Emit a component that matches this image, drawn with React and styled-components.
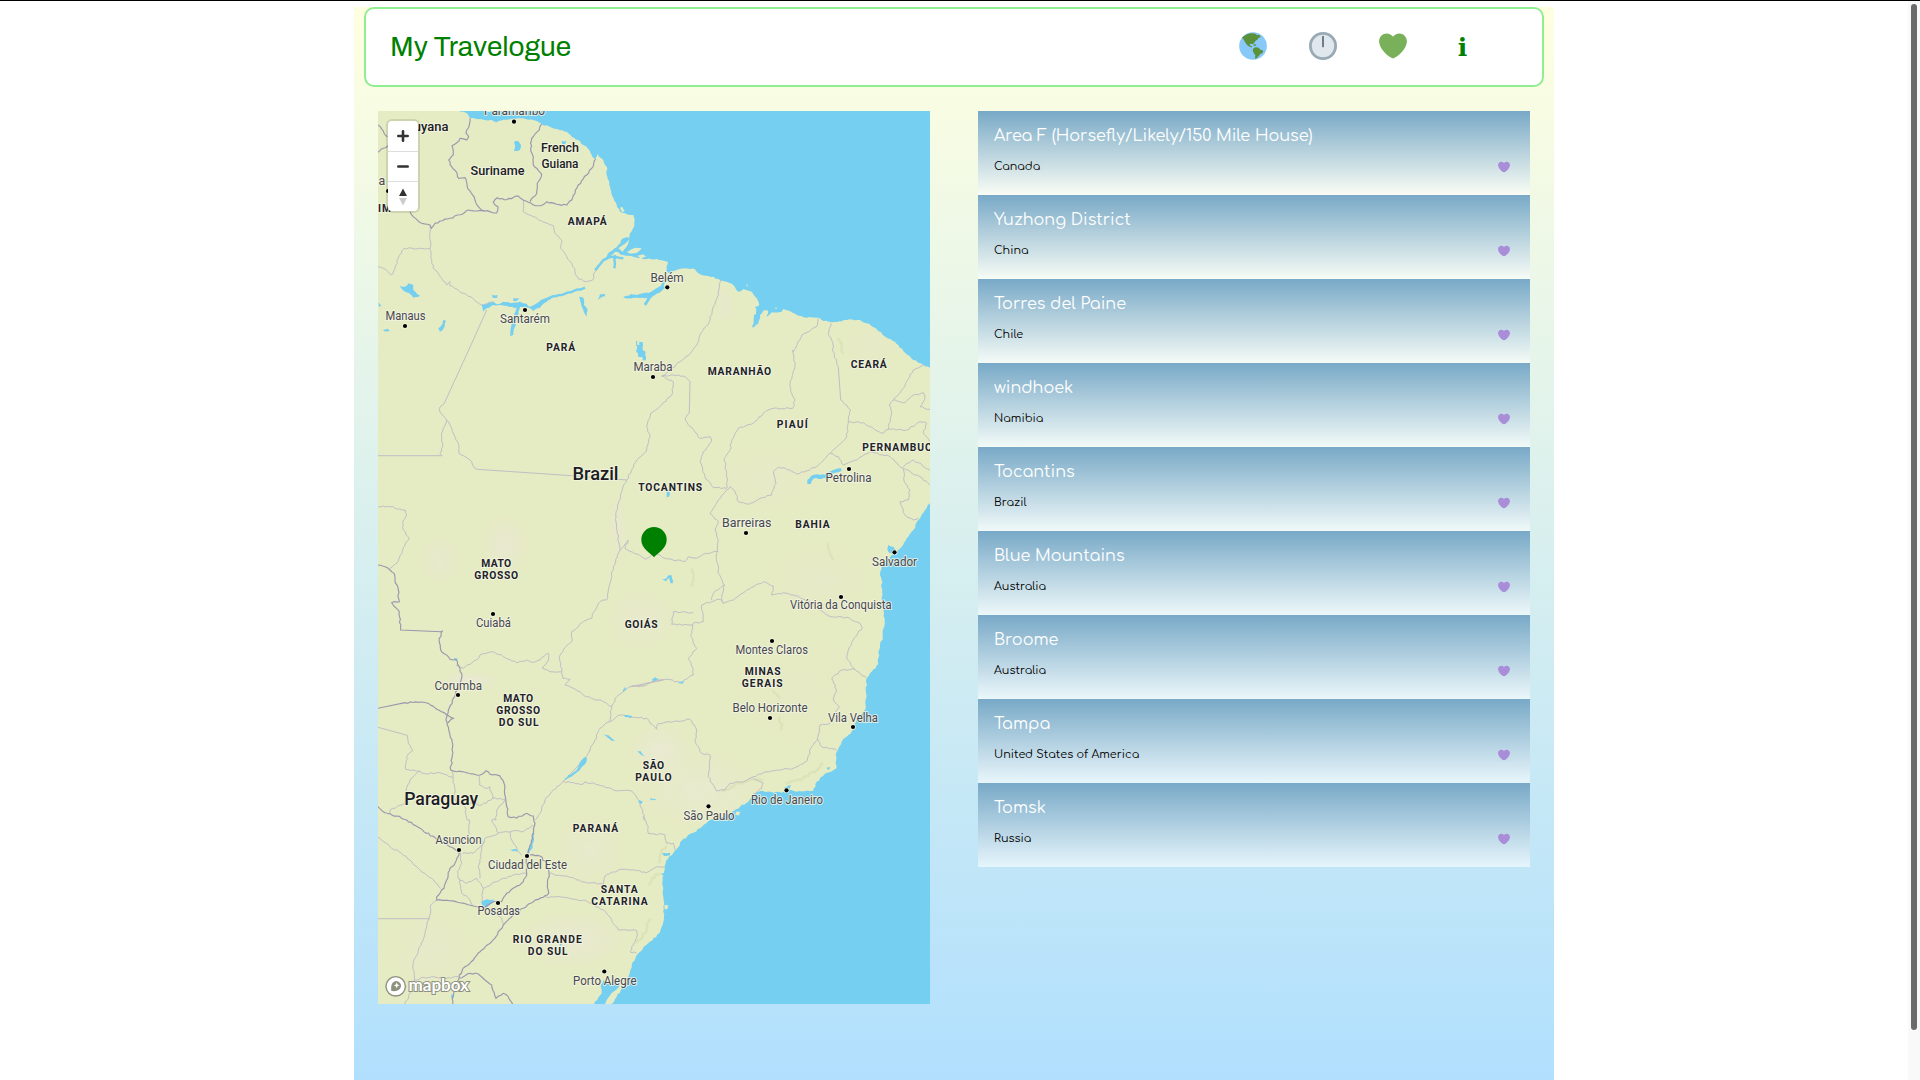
import React from "react";
import styled, { createGlobalStyle } from "styled-components";

const Global = createGlobalStyle`
  * { box-sizing: border-box; }
  html, body { margin: 0; padding: 0; height: 100%; overflow: hidden; background: #fff; }
  body { font-family: "Comfortaa", "Lato", sans-serif; }
`;

const Window = styled.div`
  display: flex;
  height: 1080px;
  border-top: 1px solid #000;
  overflow: hidden;
`;
const Viewport = styled.div`
  flex: 1;
  display: flex;
  justify-content: center;
  padding-top: 6px;
`;
const Track = styled.div`
  width: 12px;
  background: #f9f9f9;
  padding: 3px 3px 0;
`;
const Thumb = styled.div`
  height: 1026px;
  border-radius: 3px;
  background: #6b6b6b;
`;
const Page = styled.div`
  width: 1200px;
  height: 1124px;
  flex: none;
  background: linear-gradient(lightyellow, #addeff);
`;
const Header = styled.header`
  display: flex;
  align-items: center;
  justify-content: space-between;
  height: 80px;
  margin: 0 10px;
  padding: 0 65px 0 24px;
  background: #fff;
  border: 2px solid lightgreen;
  border-radius: 10px;
`;
const Title = styled.h1`
  margin: 0;
  padding-bottom: 2px;
  font: 400 28px "Archivo", "Liberation Sans", Arial, sans-serif;
  color: green;
`;
const Nav = styled.nav`
  display: flex;
  align-items: center;
  gap: 42px;
  padding-bottom: 3px;
`;
const NavIcon = styled.svg`
  display: block;
  width: 28px;
  height: 28px;
`;
const Info = styled.span`
  width: 27px;
  margin-right: 1px;
  padding-top: 4px;
  text-align: center;
  font: 700 25px/28px "DejaVu Serif", serif;
  color: green;
`;
const Columns = styled.main`
  display: grid;
  grid-template-columns: 552px 552px;
  gap: 48px;
  padding: 24px 24px 0;
`;
const MapBox = styled.section`
  position: relative;
  height: 893px;
  overflow: hidden;
`;
const MapSvg = styled.svg`
  display: block;
  width: 552px;
  height: 893px;
`;
const Controls = styled.div`
  position: absolute;
  top: 10px;
  left: 10px;
  width: 30px;
  border-radius: 4px;
  background: #fff;
  box-shadow: 0 0 0 2px rgba(0, 0, 0, 0.1);
`;
const ControlButton = styled.button`
  display: flex;
  align-items: center;
  justify-content: center;
  width: 30px;
  height: 30px;
  padding: 0;
  border: 0;
  background: none;
  & + & { border-top: 1px solid #ddd; }
`;
const List = styled.section`
  display: flex;
  flex-direction: column;
`;
const Card = styled.article`
  display: flex;
  flex-direction: column;
  height: 84px;
  padding: 13px 20px 0 16px;
  background: linear-gradient(#78a9c7, rgba(255, 255, 255, 0.6));
`;
const Place = styled.h2`
  margin: 0;
  font: 400 16px/24px "Comfortaa", "Lato", sans-serif;
  white-space: nowrap;
  color: #fff;
`;
const Meta = styled.div`
  display: flex;
  align-items: center;
  justify-content: space-between;
  height: 20px;
  margin-top: 9px;
`;
const Country = styled.span`
  font: 400 11.2px/20px "Comfortaa", "Lato", sans-serif;
  color: #000;
`;
const SmallHeart = styled.svg`
  width: 12px;
  height: 12px;
`;

const HEART =
  "M35.885 11.833c0-5.45-4.418-9.868-9.867-9.868-3.308 0-6.227 1.633-8.018 4.129-1.791-2.496-4.71-4.129-8.017-4.129-5.45 0-9.868 4.417-9.868 9.868 0 .772.098 1.52.266 2.241C1.751 22.587 11.216 31.568 18 34.034c6.783-2.466 16.249-11.447 17.617-19.959.17-.721.268-1.469.268-2.242z";

/* Map geometry is stored per tile, in thirds of a pixel from the tile's corner. */
const TILES = {
  A: [370, 105], B: [630, 105], C: [370, 340], D: [630, 340],
  E: [370, 590], F: [630, 590], G: [370, 800], H: [630, 800],
};
const parse = (src) => {
  const out = [];
  let origin = TILES.A;
  src.trim().split(/\s+/).forEach((tok) => {
    if (TILES[tok]) { origin = TILES[tok]; return; }
    const [x, y] = tok.split(",").map(Number);
    out.push([origin[0] + x / 3, origin[1] + y / 3]);
  });
  return out;
};
const noise = (n) => {
  const s = Math.sin(n * 12.9898) * 43758.5453;
  return (s - Math.floor(s)) * 2 - 1;
};
const roughen = (pts, amp) => {
  const out = [pts[0]];
  for (let i = 1; i < pts.length; i++) {
    const [x0, y0] = pts[i - 1];
    const [x1, y1] = pts[i];
    const len = Math.hypot(x1 - x0, y1 - y0);
    const n = len > 26 ? 1 : Math.max(1, Math.round(len / 2.6));
    for (let k = 1; k < n; k++) {
      const d = noise(x0 + y0 * 3 + k * 7) * amp;
      out.push([x0 + ((x1 - x0) * k) / n - ((y1 - y0) / len) * d, y0 + ((y1 - y0) * k) / n + ((x1 - x0) / len) * d]);
    }
    out.push([x1, y1]);
  }
  return out;
};
const path = (src, amp = 0.8, close = false) =>
  "M" + roughen(parse(src), amp).map(([x, y]) => `${x.toFixed(1)} ${y.toFixed(1)}`).join("L") + (close ? "Z" : "");

const LAND = `A 24,18 268,18 280,20 296,32 300,40 330,42 345,45 365,45 380,52 400,44 450,40 475,44 500,48 515,57 545,68 570,76 590,80 605,95 625,105 640,120 655,132 665,150 675,162 682,148 700,165 710,185 712,215 720,245 728,275 740,300 750,320 765,325 790,330 794,345 792,365 780,385 778,398 760,400 745,420 720,440 705,460 690,478 715,458 735,440 760,450 790,455 830,462 860,462 892,470
B 113,468 108,500 125,503 140,495 165,490 195,493 210,508 235,513 265,522 290,530 310,540 325,560 340,552 365,560 380,580 388,600 375,605 378,620 380,640 365,668 385,655 390,630 405,615 415,618 410,635 425,622 455,620 460,612 480,618 500,630 530,638 562,638 580,648 605,652 650,645 690,645 710,655 740,672 770,698 795,710 820,738 850,765 872,775 880,780 900,788
D 900,490 880,518 865,540 850,570 830,595 815,620 800,640 785,645 770,665 755,680 750,705 755,720 755,780
F 757,40 764,92 758,140 747,180 745,222 720,250 709,268 708,310 708,350 700,365 680,385 665,425 650,440 635,455 625,478 617,495 620,535 590,548 560,575 550,602 500,605 475,598 470,605 430,608 400,603 375,610 360,628
H 355,5 330,20 300,40 270,55 235,62 210,85 185,100 155,122 145,142 130,160 108,182 105,205 98,240 100,290 102,350 95,380 88,400 55,430 25,460 5,495
G 775,530 755,565 740,590 725,612 24,612`;

const WATER = [
  "G 672,612 695,580 692,560 700,540 720,555 745,540 748,560 730,575 710,600 705,612",
  "A 432,110 445,108 453,120 450,135 432,138 436,125",
  "A 88,542 105,545 115,535 130,540 130,555 150,572 130,578 118,565 98,555",
  "A 24,592 34,602 28,606",
  "A 205,670 218,655 222,644 228,648 222,668 210,680",
  "A 40,674 52,671 60,677 42,679",
  "A 335,600 350,597 370,590 380,598 400,590 420,594 450,590 470,596 478,605 500,595 520,582 545,572 560,570 530,590 510,608 490,618 478,608 450,606 440,640 430,690 420,694 422,670 440,608 405,602 370,600 350,610 340,620",
  "A 365,570 382,570 382,578 368,578", "A 430,580 448,580 440,588 430,588",
  "A 628,575 640,578 642,600 653,615 650,635 640,615 634,600",
  "A 684,585 690,568 704,566 706,574 692,578", "A 575,108 590,108 585,118 576,116",
  "A 760,575 800,570 850,560 880,542 888,548 860,566 840,580 828,600 822,596 832,578 800,578 765,580",
  "B 18,708 22,708 22,720 28,720 28,710 38,712 38,735 47,740 47,766 38,766 38,757 24,755 24,745 18,740 22,722 18,722",
  "B 372,630 390,620 385,645 370,668",
  "D 532,420 548,405 585,404 605,392 632,384 635,392 610,400 590,415 550,416 542,432 532,432",
  "D 110,450 119,448 117,470 110,472", "D 97,718 110,715 113,707 125,706 128,730 122,730 118,714 108,724",
  "D 775,615 790,620 800,638 780,640 772,628",
  "E 584,565 620,540 635,510 648,500 650,512 630,540 600,562 586,570",
  "E 700,432 715,436 735,452 725,452", "E 802,484 812,484 824,498 815,496", "E 845,270 856,262 867,266 852,274",
  "E 758,300 766,290 768,298 760,305", "E 762,376 786,378 786,382 766,382", "E 840,625 857,627 857,631 842,631",
  "E 806,630 818,634 814,642 806,638", "E 252,205 262,205 260,212 254,212",
  "F 145,275 162,272 158,281 148,280", "F 462,592 482,585 480,594 472,600",
  "F 590,533 600,531 598,539 592,538",
  "G 333,305 350,298 372,298 368,308 352,322 338,318", "G 420,148 440,148 444,155 428,154",
  "G 488,98 494,100 488,140 478,160 472,158 484,130", "G 244,583 252,585 248,597 244,592",
  "G 876,160 900,158 900,166 882,168", "G 872,222 888,220 884,228",
  "G 568,432 576,432 572,438",
];
const ISLANDS = ["A 745,430 770,412 778,402 772,422 758,440", "A 770,440 795,428 815,430 800,444 780,446", "A 802,452 820,448 828,455 812,460", "B 396,632 412,615 415,625 402,640", "B 435,608 441,608 440,612 436,612", "B 348,538 354,540 352,545", "A 750,308 757,305 764,318 756,322", "H 318,35 330,36 328,46 316,44", "H 103,314 116,316 112,328 104,328"];
const NATIONAL = [
  "A 24,60 40,78 52,95", "A 24,142 40,130 54,122",
  "A 300,40 298,60 290,75 288,85 296,95 290,105 270,100 262,112 246,122 250,150 236,165 245,185 262,208 266,220 285,218 292,245 302,262 315,285 328,308 345,318",
  "A 120,320 130,335 155,355 180,360 184,370 195,355 210,348 240,340 262,330 285,322 295,315 320,318 345,318 380,324 384,305 370,292 382,278 410,284 445,273 460,285 475,292 490,300 510,302 530,290 560,298 590,300 605,285 615,265 625,240 650,210 665,190 677,162",
  "A 515,57 508,75 485,100 482,130 490,155 490,180 515,208 502,235 500,265 480,290",
  "C 24,675 45,680 60,690 72,700 75,720 85,750 87,780 E 88,35 65,38 88,65 92,120 214,125 218,122 208,145 212,180 240,208 258,208 270,235 276,260 262,300 250,325 232,375 228,390 240,435 248,470 246,505 242,540 260,545 290,548 330,555 348,542 360,553 390,558 402,580 406,620 G 415,50 440,54 470,40 490,48 495,70 490,100 484,130 470,165 470,225 460,245 435,262 410,280 395,305 370,305 345,322 310,318 270,308 240,302 200,300 200,290 222,265 230,240 240,205 255,190 268,160 240,140 200,118 150,85 110,60 80,48 45,38 24,20",
  "E 24,355 105,338 168,338 200,358 250,385 232,400",
  "G 480,165 510,168 530,190 537,220 532,260 536,280 520,292 490,305 460,325 430,345 400,375 390,390 365,425 330,455 310,480 285,500 268,525 265,540 250,570 248,612",
  "G 268,535 300,520 325,522 345,540 365,555 378,595 400,580 415,590 428,612",
];
const STATES = [
  "A 460,285 460,320 490,335 515,348 550,362 555,385 575,405 572,430 590,455 605,475 615,500 625,522 650,530 668,525 675,500 705,460",
  "A 180,365 180,430 185,475 195,495 215,520 230,540 240,530 240,542 280,565 300,575 335,600 370,590",
  "A 180,430 102,430 85,460 75,490 65,510 40,490 24,485",
  "A 350,615 304,718 C 225,185 208,205 212,220 230,240 220,265 215,290 218,320 210,340 216,347 24,347",
  "C 230,240 245,265 255,290 265,310 267,340 300,360 310,378 322,388 605,407 770,420",
  "C 24,500 70,500 75,505 105,510 110,525 98,545 100,570 118,595 105,615 95,640 80,670 60,685",
  "D 95,108 130,125 125,165 95,195 62,220 50,260 60,290 50,330 20,360 C 770,420 755,455 745,490 738,530 742,580 750,630 730,680 720,730 710,780 E 690,35 672,65 665,85 640,95 605,125 605,155 580,180 568,205 575,245 578,265 600,268 585,285 610,295 650,320 700,335 725,350 718,395 690,415 675,450 660,480 640,510 585,570 545,605 525,630 510,670 495,690",
  "C 750,630 775,600 765,625 830,658",
  "D 50,655 75,640 105,655 165,665 175,650 200,655 230,640 265,635",
  "G 24,112 60,140 95,160 120,180 150,210 185,235 212,265",
  "G 200,300 182,315 180,345 165,400 145,450 130,490 133,540 120,580 105,612", "G 24,356 180,356",
  "G 130,545 150,535 190,530 220,535 265,530",
  "E 24,412 112,436 115,460 128,482 110,500 107,538 150,543 160,550 215,550 250,562",
  "E 150,543 120,570 108,600 105,640 60,660 55,675",
  "E 246,545 256,600 252,625 285,650 292,690 G 298,60 298,100 275,130",
  "E 330,555 328,585 345,595 360,590 368,625 335,645 300,640", "E 368,625 405,628 380,660 378,690 G 365,60 385,100 345,115 342,125",
  "G 385,100 430,92 460,95 490,75", "G 420,95 425,120 445,155 455,165",
  "G 345,125 310,160 278,160", "G 342,125 335,150 325,200 330,235",
  "G 270,155 275,190 262,215 265,235 290,250 320,235 340,265 380,245 430,225 470,220",
  "G 268,235 275,280 300,300 310,318", "G 340,265 335,300 345,322 395,355 400,375",
  "E 258,225 280,235 320,210 330,195 370,185 400,200 440,218 470,210 485,217 510,210 535,190 536,210 517,235 540,245 575,245",
  "E 725,350 740,320 765,300 780,290 820,288 850,275 880,270 F 0,290 40,285 80,270 110,268 150,278 190,255 190,235 175,205 200,175 182,135 190,100 220,95 215,45 245,35 270,28 280,40 310,30 345,5 D 400,725 430,738 425,765 460,758 490,765 F 540,35 600,80 650,82 690,100 697,112 670,150 655,180 650,205 675,238 710,265",
  "E 718,395 750,375 780,380 F 50,385 60,400 80,418 85,400 130,395 180,388 200,420 195,450 215,490 240,495 235,560 258,602 285,600 300,580 340,575 370,560 400,548 440,540 490,535 532,512 545,470 562,450 570,405 600,400 615,370 628,350 610,330 620,300 605,265 635,240 675,238",
  "E 580,575 640,582 645,575 700,588 740,602 785,603 805,630 815,655 825,690 H 40,50 55,80 55,100 105,105 110,130 130,130 135,150",
  "F 562,445 575,470 620,480", "F 370,565 400,580 395,595 370,612", "F 190,68 130,65 125,103 190,105",
  "D 283,735 275,780 F 280,40", "D 283,735 250,760 245,780",
  "G 537,220 600,232 650,248 700,252 705,228 750,208 800,212 830,218 860,200 885,202",
  "G 520,290 580,292 650,303 700,330 725,360 745,390 800,392 800,412 790,435 780,455 800,460",
  "B 272,525 265,570 250,605 238,650 210,690 200,720 D 185,35 150,65 95,108 130,105 160,108 180,125 178,220 165,240 210,295 240,290 245,305 220,335 210,365 225,410 250,443 290,445",
  "B 565,640 560,665 515,690 490,740 D 488,30 495,75 480,130 482,155 495,180 488,205 430,205 400,220 370,250 325,265 305,300 300,330 283,355 290,400 290,445",
  "B 603,655 595,685 610,720 D 607,30 625,80 632,180 662,210 655,245 650,290 605,335 560,380 500,402 480,390 445,382 430,395 438,430 425,465 390,475 355,493 325,485 315,455 300,440 265,480 240,520 265,545 255,570 265,600 260,640 265,700 283,735",
  "D 655,245 700,248 755,280 775,268 785,220 778,195 790,180 820,145 850,90 880,75",
  "D 790,180 825,188 850,165 880,158 885,175 870,200 900,208", "D 775,268 830,270 870,245 890,250 880,280 900,305",
  "D 600,340 625,350 640,375 680,360 720,335 780,350 805,375 820,385 870,410 900,435",
  "D 820,385 825,430 840,450 835,480 810,485 825,525 850,540 865,535", "D 820,380 850,360 900,390",
];
const RIVERS = ["A 545,575 580,568 610,558 645,548", "A 675,495 700,465 725,455 760,460", "A 735,450 733,490", "B 0,570 30,575 65,565 95,545 110,520", "B 65,565 45,600"];
const SHADES = [
  [505, 545, 26, 32, "#ebe8d6"], [440, 560, 22, 28, "#e9e9d2"], [618, 530, 12, 40, "#e9e9d0"], [700, 790, 70, 45, "#e9ead2"],
  [570, 940, 60, 30, "#ebe8d8"], [640, 620, 40, 34, "#e9e9d0"], [470, 680, 34, 9, "#ebe8d8"], [590, 850, 40, 40, "#e9ead0"],
  [820, 580, 60, 46, "#e7eaca"], [725, 305, 10, 22, "#e9e9d2"], [870, 345, 34, 22, "#e8eaca"], [660, 750, 34, 28, "#ebe9d8"],
  [430, 950, 50, 50, "#e8eacb"], [800, 690, 80, 70, "#e6eac6"], [770, 480, 60, 40, "#e7eac9"],
];
const RELIEF = ["F 275,605 330,580 365,565 400,572", "F 465,580 520,565 560,540 580,520", "H 85,190 95,150 110,138", "G 800,430 830,390 840,355", "G 835,255 845,235 870,220", "D 595,610 600,640 610,660", "D 183,740 190,710 188,685", "B 625,700 635,730 640,745", "F 450,380 455,420", "F 430,300 450,325"];

const CITIES = [
  // label, left, baseline, width, dot x, dot y
  ["Paramaribo", 484, 115.5, 61, 514, 121.7], ["Belém", 650.5, 282, 33, 667.3, 287.3], ["Manaus", 385.5, 320, 40, 405, 326],
  ["Santarém", 500, 323, 50, 525, 310], ["Maraba", 633.5, 371, 39, 653, 377], ["Petrolina", 825.5, 482, 46, 849, 469],
  ["Barreiras", 722, 527, 49.5, 746, 533], ["Salvador", 872, 566, 45, 894.5, 552.3], ["Vitória da Conquista", 790, 609, 101.5, 841, 597],
  ["Montes Claros", 735.5, 653.9, 72.5, 772, 641], ["Belo Horizonte", 732.5, 711.9, 75, 770, 718], ["Vila Velha", 828, 721.9, 50, 853, 727],
  ["Rio de Janeiro", 751, 804, 72, 786.5, 790.3], ["São Paulo", 683.5, 819.9, 51, 708.5, 806.3], ["Cuiabá", 476, 627, 35, 493, 614],
  ["Corumba", 434.5, 689.9, 47.5, 458, 695], ["Asuncion", 435.5, 844, 46, 459, 850], ["Ciudad del Este", 488, 868.9, 79, 527, 856],
  ["Posadas", 477.5, 915, 42.5, 498, 903], ["Porto Alegre", 573, 985, 63.5, 604.3, 971.5],
];
const STATE_LABELS = [
  ["AMAPÁ", 568, 225.5, 39], ["PARÁ", 546.5, 350.9, 29], ["MARANHÃO", 708, 374.9, 63.5], ["CEARÁ", 851, 368, 36], ["PIAUÍ", 777, 427.9, 31],
  ["PERNAMBUCO", 862.5, 451, 77.5], ["TOCANTINS", 638.5, 490.9, 64], ["BAHIA", 795.5, 527.9, 34.5], ["MATO", 481.5, 567, 30], ["GROSSO", 474.5, 579, 44],
  ["GOIÁS", 625, 628, 33], ["MINAS", 745, 675.5, 36], ["GERAIS", 742, 687.5, 41], ["MATO", 503.5, 702, 30], ["GROSSO", 496.5, 714, 44],
  ["DO SUL", 499, 726, 40], ["SÃO", 643, 768.9, 21.5], ["PAULO", 635.5, 780.9, 36.5], ["PARANÁ", 573, 832, 45.5], ["SANTA", 601, 893, 37],
  ["CATARINA", 591.5, 905, 56.5], ["RIO GRANDE", 513, 943, 69], ["DO SUL", 528, 955, 40],
];
const COUNTRY_LABELS = [
  ["Suriname", 470.5, 175, 54, 13.4], ["French", 541, 152, 38, 13.4], ["Guiana", 541.5, 167.5, 37, 13.4], ["Guyana", 405, 131, 43.5, 13.4],
  ["Brazil", 572.5, 480, 46, 19], ["Paraguay", 404.2, 805, 74, 19],
];

const CityText = styled.text`
  font: 400 12.4px "DIN Pro", "Roboto", sans-serif;
  fill: #48484e;
  stroke: #f4f6e6;
  stroke-width: 2px;
  stroke-opacity: 0.8;
  stroke-linejoin: round;
  paint-order: stroke;
`;
const StateText = styled(CityText)`
  font: 700 10.3px "DIN Pro", "Roboto", sans-serif;
  fill: #222228;
`;
const CountryText = styled(CityText)`
  font: 500 ${(p) => p.$size}px "DIN Pro", "Roboto", sans-serif;
  fill: #1c1c22;
`;
const LogoText = styled.text`
  font: 700 16.5px "Lato", sans-serif;
  fill: #fff;
  stroke: #8c9180;
  stroke-width: 2px;
  paint-order: stroke;
`;

function TravelMap() {
  return (
    <MapBox>
      <MapSvg viewBox="378 111 552 893">
        <defs>
          <clipPath id="land"><path d={path(LAND, 0.8, true)} /></clipPath>
          {SHADES.map((s, i) => (
            <radialGradient id={"shade" + i} key={i}>
              <stop offset="0" stopColor={s[4]} stopOpacity=".75" />
              <stop offset="1" stopColor={s[4]} stopOpacity="0" />
            </radialGradient>
          ))}
        </defs>
        <rect x="378" y="111" width="552" height="893" fill="#75cff0" />
        <path d={path(LAND, 0.8, true)} fill="#e5ebc2" />
        <g clipPath="url(#land)">
          {SHADES.map((s, i) => <ellipse key={i} cx={s[0]} cy={s[1]} rx={s[2]} ry={s[3]} fill={`url(#shade${i})`} />)}
          {RELIEF.map((d) => <path key={d} d={path(d, 1.4)} fill="none" stroke="#d9e0b4" strokeWidth="2.4" strokeOpacity=".75" />)}
        </g>
        {ISLANDS.map((d) => <path key={d} d={path(d, 0.3, true)} fill="#e5ebc2" />)}
        {STATES.map((d) => <path key={d} d={path(d)} fill="none" stroke="#c0bfc6" strokeWidth="1" />)}
        {WATER.map((d) => <path key={d} d={path(d, 0.7, true)} fill="#75cff0" />)}
        {RIVERS.map((d) => <path key={d} d={path(d, 0.5)} fill="none" stroke="#75cff0" strokeWidth="2.4" />)}
        {NATIONAL.map((d) => <path key={d} d={path(d)} fill="none" stroke="#9b98ae" strokeWidth="1.15" />)}
        <CityText x="378.500" y="184.500">a</CityText>
        <StateText x="378" y="211.500" textLength="13">IM</StateText>
        <circle cx="388" cy="191" r="2" />
        {CITIES.map(([t, x, y, w, cx, cy]) => (
          <g key={t}>
            <circle cx={cx} cy={cy} r="2.9" fill="#f2f5e4" fillOpacity=".8" />
            <circle cx={cx} cy={cy} r="2.1" fill="#000" />
            <CityText x={x} y={y - 0.3} textLength={w} lengthAdjust="spacingAndGlyphs">{t}</CityText>
          </g>
        ))}
        {STATE_LABELS.map(([t, x, y, w], i) => <StateText key={i} x={x - 0.3} y={y - 0.4} textLength={w}>{t}</StateText>)}
        {COUNTRY_LABELS.map(([t, x, y, w, s]) => (
          <CountryText key={t} $size={s} x={x} y={y} textLength={w} lengthAdjust="spacingAndGlyphs">{t}</CountryText>
        ))}
        <path d="M654 557.300c-1.500-1.800-4.500-4-7.500-6.800-3.300-3.100-5.200-6.600-5.200-10.700a12.700 12.700 0 0 1 25.400 0c0 4.100-1.900 7.600-5.200 10.700-3 2.800-6 5-7.500 6.800z" fill="green" />
        <circle cx="395.700" cy="986.300" r="10.400" fill="#8c9180" />
        <circle cx="395.700" cy="986.300" r="9" fill="#fff" />
        <path d="M391.300 991c-.6-4.500.2-7.500 2-8.800a4.700 4.700 0 0 1 6.600 6.600c-1.300 1.800-4.200 2.700-8.600 2.200z" fill="#8c9180" />
        <path d="m396.700 982.600.9 1.900 1.900.9-1.900.9-.9 1.900-.9-1.900-1.900-.9 1.900-.9z" fill="#fff" />
        <LogoText x="408.500" y="991" textLength="60.500" lengthAdjust="spacingAndGlyphs">mapbox</LogoText>
      </MapSvg>
      <Controls>
        <ControlButton aria-label="Zoom in">
          <svg width="14" height="14" viewBox="0 0 14 14"><path d="M7 2.300v9.400M2.300 7h9.400" stroke="#333" strokeWidth="2.600" strokeLinecap="round" /></svg>
        </ControlButton>
        <ControlButton aria-label="Zoom out">
          <svg width="14" height="14" viewBox="0 0 14 14"><path d="M2.300 6.500h9.400" stroke="#333" strokeWidth="2.600" strokeLinecap="round" /></svg>
        </ControlButton>
        <ControlButton aria-label="Reset bearing">
          <svg width="10" height="18" viewBox="0 0 10 18"><path d="M1 8 5 .5 9 8z" fill="#333" /><path d="M1 10h8l-4 7.500z" fill="#ccc" /></svg>
        </ControlButton>
      </Controls>
    </MapBox>
  );
}

const PLACES = [
  ["Area F (Horsefly/Likely/150 Mile House)", "Canada"],
  ["Yuzhong District", "China"],
  ["Torres del Paine", "Chile"],
  ["windhoek", "Namibia"],
  ["Tocantins", "Brazil"],
  ["Blue Mountains", "Australia"],
  ["Broome", "Australia"],
  ["Tampa", "United States of America"],
  ["Tomsk", "Russia"],
];

export default function App() {
  return (
    <>
      <Global />
      <Window>
        <Viewport>
          <Page>
            <Header>
              <Title>My Travelogue</Title>
              <Nav>
                <NavIcon viewBox="0 0 36 36">
                  <circle cx="18" cy="18" r="17.800" fill="#88c9f9" />
                  <path fill="#5c913b" d="M3.800 7.500C6.500 4.300 10 2.500 14 1.800c3-.3 6 .1 8 .7l.5 1.700 2.500-.8 2.500 1.500L27.500 7l-2.500.5L24 9.500l-3 2-1.500 3-2 1-2.500-.5-1.500 1 1 1.500 2.500 1-.5 1.500-3.500-1.500-3-2-2.500-4-1.500-3zM18 21.500l3-2 4.500.8 1.500 2.200 4 1.200-.5 3-3.500 2-1.500 2.300-3.500 3.500-1.500-.5.5-4-2.500-3.500-.8-3zM17.500 16.500l3.500-.8 1.500 1.300-2 .9z" />
                </NavIcon>
                <NavIcon viewBox="0 0 36 36">
                  <circle cx="18" cy="18" r="16.200" fill="#e1e8ed" stroke="#99aab5" strokeWidth="3.600" />
                  <path d="M18 6V18.500" stroke="#66757f" strokeWidth="2.400" strokeLinecap="round" />
                </NavIcon>
                <NavIcon viewBox="0 0 36 36"><path fill="#78b159" d={HEART} /></NavIcon>
                <Info>i</Info>
              </Nav>
            </Header>
            <Columns>
              <TravelMap />
              <List>
                {PLACES.map(([place, country]) => (
                  <Card key={place}>
                    <Place>{place}</Place>
                    <Meta>
                      <Country>{country}</Country>
                      <SmallHeart viewBox="0 0 36 36"><path fill="#aa8dd8" d={HEART} /></SmallHeart>
                    </Meta>
                  </Card>
                ))}
              </List>
            </Columns>
          </Page>
        </Viewport>
        <Track><Thumb /></Track>
      </Window>
    </>
  );
}
